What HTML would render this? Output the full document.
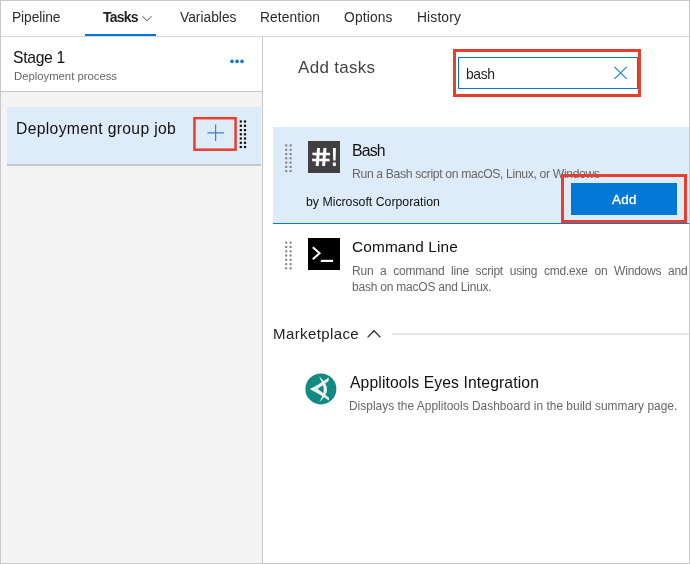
<!DOCTYPE html>
<html><head><meta charset="utf-8">
<style>
*{box-sizing:border-box;margin:0;padding:0}
html,body{width:690px;height:564px;overflow:hidden;background:#fff}
body{font-family:"Liberation Sans",sans-serif;color:#222;position:relative}
.abs{position:absolute}
.t{position:absolute;white-space:nowrap;line-height:1;will-change:transform}
#frame{position:absolute;left:0;top:0;width:690px;height:564px;border:1px solid #c8c8c8;z-index:50;pointer-events:none}
</style></head><body>
<!-- top tabs -->
<div class="abs" style="left:0;top:36px;width:690px;height:1px;background:#d8d8d8"></div>
<div class="abs" style="left:85px;top:34px;width:71px;height:2px;background:#0078d4"></div>
<svg class="abs" style="left:141px;top:13.5px" width="12" height="9" viewBox="0 0 12 9"><path d="M1.5 2.2 L6 6.9 L10.5 2.2" fill="none" stroke="#555" stroke-width="1"/></svg>

<!-- left panel -->
<div class="abs" style="left:0;top:37px;width:262px;height:527px;background:#f4f4f4"></div>
<div class="abs" style="left:0;top:37px;width:262px;height:54px;background:#fff"></div>
<div class="abs" style="left:0;top:91px;width:262px;height:1px;background:#c8c8c8"></div>
<div class="abs" style="left:262px;top:37px;width:1px;height:527px;background:#c8c8c8"></div>
<svg class="abs" style="left:0;top:0" width="690" height="564"><g fill="#0078d4"><circle cx="232" cy="61.4" r="1.8"/><circle cx="237" cy="61.4" r="1.8"/><circle cx="242" cy="61.4" r="1.8"/></g></svg>

<div class="abs" style="left:7px;top:107px;width:254px;height:57px;background:#deecf9"></div>
<div class="abs" style="left:7px;top:164px;width:254px;height:2px;background:#c8c8c8"></div>
<svg class="abs" style="left:0;top:0" width="690" height="564">
<rect x="194.45" y="118.2" width="41.1" height="31.5" fill="none" stroke="#ea3e2c" stroke-width="2.5"/>
<path d="M215.6 124.6V141M207.4 132.8H223.9" stroke="#3b7fd1" stroke-width="1.2" fill="none"/>
</svg>
<svg class="abs" style="left:0;top:0" width="690" height="564"><g fill="#111"><rect x="239.70" y="120.40" width="2.2" height="2.2"/><rect x="243.90" y="120.40" width="2.2" height="2.2"/><rect x="239.70" y="124.70" width="2.2" height="2.2"/><rect x="243.90" y="124.70" width="2.2" height="2.2"/><rect x="239.70" y="129.00" width="2.2" height="2.2"/><rect x="243.90" y="129.00" width="2.2" height="2.2"/><rect x="239.70" y="133.20" width="2.2" height="2.2"/><rect x="243.90" y="133.20" width="2.2" height="2.2"/><rect x="239.70" y="137.40" width="2.2" height="2.2"/><rect x="243.90" y="137.40" width="2.2" height="2.2"/><rect x="239.70" y="141.70" width="2.2" height="2.2"/><rect x="243.90" y="141.70" width="2.2" height="2.2"/><rect x="239.70" y="145.90" width="2.2" height="2.2"/><rect x="243.90" y="145.90" width="2.2" height="2.2"/></g></svg>

<!-- right panel -->
<div class="abs" style="left:453px;top:49px;width:188px;height:48px;border:3px solid #ea3e2c"></div>
<div class="abs" style="left:458px;top:57px;width:180px;height:32px;border:1px solid #0078d4;background:#fff"></div>
<svg class="abs" style="left:0;top:0" width="690" height="564"><path d="M614.4 66.9L626.8 78.9M626.8 66.9L614.4 78.9" stroke="#1e86d8" stroke-width="1.2" fill="none"/></svg>

<!-- bash item -->
<div class="abs" style="left:273px;top:127px;width:417px;height:96px;background:#deecf9"></div>
<div class="abs" style="left:273px;top:223px;width:417px;height:1.3px;background:#0078d4"></div>
<svg class="abs" style="left:0;top:0" width="690" height="564"><g fill="#7d7d7d"><rect x="285.20" y="144.40" width="2" height="2"/><rect x="289.60" y="144.40" width="2" height="2"/><rect x="285.20" y="148.80" width="2" height="2"/><rect x="289.60" y="148.80" width="2" height="2"/><rect x="285.20" y="153.10" width="2" height="2"/><rect x="289.60" y="153.10" width="2" height="2"/><rect x="285.20" y="157.30" width="2" height="2"/><rect x="289.60" y="157.30" width="2" height="2"/><rect x="285.20" y="161.60" width="2" height="2"/><rect x="289.60" y="161.60" width="2" height="2"/><rect x="285.20" y="165.90" width="2" height="2"/><rect x="289.60" y="165.90" width="2" height="2"/><rect x="285.20" y="170.10" width="2" height="2"/><rect x="289.60" y="170.10" width="2" height="2"/></g></svg>
<div class="abs" style="left:308px;top:141px;width:32px;height:32px;background:#404040"></div>
<svg class="abs" style="left:0;top:0;will-change:transform" width="690" height="564"><g fill="#fff" font-weight="bold"><text x="0" y="0" font-family="DejaVu Sans, sans-serif" font-size="25" transform="translate(311.5,166) skewX(11) scale(1.08,1)">#</text><text x="0" y="0" font-family="Liberation Sans, sans-serif" font-size="25.5" transform="translate(331.1,166) scale(0.8,1)">!</text></g></svg>
<div class="abs" style="left:571px;top:183px;width:106px;height:32px;background:#0078d4"></div>
<div class="abs" style="left:561px;top:174px;width:126px;height:49px;border:3px solid #ea3e2c;z-index:10"></div>

<!-- cmd item -->
<svg class="abs" style="left:0;top:0" width="690" height="564"><g fill="#7d7d7d"><rect x="285.20" y="241.60" width="2" height="2"/><rect x="289.60" y="241.60" width="2" height="2"/><rect x="285.20" y="246.00" width="2" height="2"/><rect x="289.60" y="246.00" width="2" height="2"/><rect x="285.20" y="250.30" width="2" height="2"/><rect x="289.60" y="250.30" width="2" height="2"/><rect x="285.20" y="254.50" width="2" height="2"/><rect x="289.60" y="254.50" width="2" height="2"/><rect x="285.20" y="258.80" width="2" height="2"/><rect x="289.60" y="258.80" width="2" height="2"/><rect x="285.20" y="263.10" width="2" height="2"/><rect x="289.60" y="263.10" width="2" height="2"/><rect x="285.20" y="267.30" width="2" height="2"/><rect x="289.60" y="267.30" width="2" height="2"/></g></svg>
<div class="abs" style="left:308px;top:238px;width:32px;height:32px;background:#000"></div>
<svg class="abs" style="left:0;top:0" width="690" height="564"><path d="M312.8 247.2L319.6 253.2L312.8 259.2" stroke="#fff" stroke-width="2" fill="none"/><rect x="320.8" y="259.8" width="12.2" height="2.2" fill="#fff"/></svg>

<!-- marketplace -->
<svg class="abs" style="left:0;top:0" width="690" height="564"><path d="M367.6 337.4L374 330.8L380.4 337.4" fill="none" stroke="#2b2b2b" stroke-width="1.3"/></svg>
<div class="abs" style="left:392px;top:333px;width:298px;height:2px;background:#e7e7e7"></div>

<svg class="abs" style="left:0;top:0" width="690" height="564">
<circle cx="320.9" cy="388.9" r="15.5" fill="#108a82"/>
<g transform="translate(304,372) scale(0.06028)" fill="#eef2f1">
<path d="M95 280 L230 211 L330 146 L412 92 L406 154 L345 190 L300 230 L222 281 Z"/>
<path d="M95 280 L222 277 L300 336 L340 371 L416 428 L412 474 L300 399 L200 339 Z"/>
<path d="M250 70 Q305 118 350 180 Q386 250 381 305 Q372 390 255 497 Q308 405 324 335 Q332 270 316 225 Q295 160 250 70 Z"/>
</g>
</svg>
<div class="t" id="tab1" style="left:11.8px;top:11.32px;font-size:13.8px;color:#2b2b2b;letter-spacing:-0.1px;">Pipeline</div>
<div class="t" id="tab2" style="left:103.3px;top:11.13px;font-size:13.9px;color:#222;font-weight:bold;letter-spacing:-0.75px;">Tasks</div>
<div class="t" id="tab3" style="left:180px;top:11.32px;font-size:13.8px;color:#2b2b2b;">Variables</div>
<div class="t" id="tab4" style="left:260px;top:11.32px;font-size:13.8px;color:#2b2b2b;letter-spacing:0.1px;">Retention</div>
<div class="t" id="tab5" style="left:344px;top:11.32px;font-size:13.8px;color:#2b2b2b;letter-spacing:0.15px;">Options</div>
<div class="t" id="tab6" style="left:417px;top:11.32px;font-size:13.8px;color:#2b2b2b;letter-spacing:0.15px;">History</div>
<div class="t" id="stage" style="left:13.4px;top:50.11px;font-size:15.7px;color:#111;letter-spacing:-0.3px;">Stage 1</div>
<div class="t" id="dep" style="left:14.3px;top:71.43px;font-size:11.3px;color:#666;">Deployment process</div>
<div class="t" id="job" style="left:16px;top:120.91px;font-size:15.7px;color:#111;letter-spacing:0.33px;">Deployment group job</div>
<div class="t" id="addtasks" style="left:297.6px;top:58.91px;font-size:17px;color:#444;letter-spacing:0.3px;">Add tasks</div>
<div class="t" id="q" style="left:466.4px;top:67.63px;font-size:13.9px;color:#222;letter-spacing:-0.4px;">bash</div>
<div class="t" id="bash" style="left:352px;top:142.73px;font-size:15.8px;color:#111;letter-spacing:-0.8px;">Bash</div>
<div class="t" id="bashd" style="left:352px;top:168.27px;font-size:12.2px;color:#666;letter-spacing:-0.35px;">Run a Bash script on macOS, Linux, or Windows</div>
<div class="t" id="byms" style="left:306px;top:195.79px;font-size:12.3px;color:#111;">by Microsoft Corporation</div>
<div class="t" id="add" style="left:612.4px;top:192.96px;font-size:13.4px;color:#fff;-webkit-text-stroke:0.35px #fff;letter-spacing:0.3px;">Add</div>
<div class="t" id="cmd" style="left:352px;top:239.26px;font-size:15.4px;color:#111;letter-spacing:0.13px;">Command Line</div>
<div class="t" id="cmdd1" style="left:352px;top:265.14px;font-size:12px;color:#666;word-spacing:3.6px;letter-spacing:-0.22px;">Run a command line script using cmd.exe on Windows and</div>
<div class="t" id="cmdd2" style="left:352px;top:280.64px;font-size:12px;color:#666;letter-spacing:-0.22px;">bash on macOS and Linux.</div>
<div class="t" id="mkt" style="left:272.8px;top:325.80px;font-size:15px;color:#222;letter-spacing:0.4px;">Marketplace</div>
<div class="t" id="appl" style="left:349.5px;top:374.61px;font-size:15.7px;color:#111;letter-spacing:0.12px;">Applitools Eyes Integration</div>
<div class="t" id="appld" style="left:348.8px;top:400.83px;font-size:11.9px;color:#666;letter-spacing:0.03px;">Displays the Applitools Dashboard in the build summary page.</div>

<div id="frame"></div>
</body></html>
